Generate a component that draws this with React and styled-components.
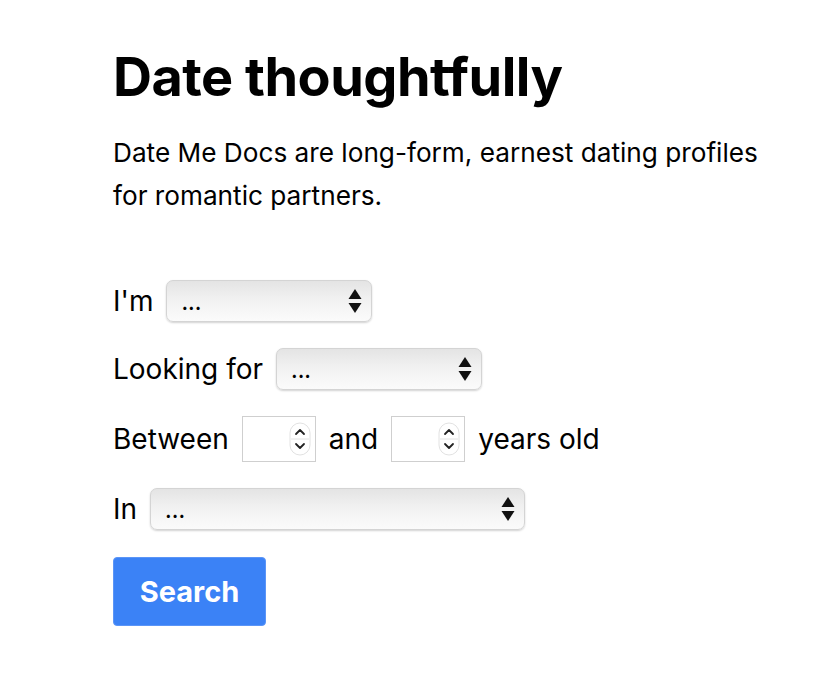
import React from "react";
import styled, { createGlobalStyle } from "styled-components";

const GlobalStyle = createGlobalStyle`
  html, body {
    margin: 0;
    padding: 0;
    background: #ffffff;
  }
  body {
    font-family: Inter, "Noto Sans", sans-serif;
    color: #000;
  }
`;

const Page = styled.main`
  padding: 44px 0 0 113px;
`;

const Title = styled.h1`
  font-size: 54px;
  font-weight: 700;
  letter-spacing: -0.5px;
  line-height: 65px;
  margin: 0 0 22px;
`;

const Lead = styled.p`
  font-size: 26.2px;
  line-height: 43px;
  margin: 0 0 63px;
  max-width: 660px;
`;

const Form = styled.form`
  display: flex;
  flex-direction: column;
  align-items: flex-start;
  gap: 26px;
`;

const Row = styled.label`
  display: flex;
  align-items: center;
  gap: 13px;
  font-size: 28px;
`;

const SelectWrap = styled.span`
  position: relative;
  display: inline-flex;
`;

const Select = styled.select`
  appearance: none;
  -webkit-appearance: none;
  width: ${(p) => p.$width}px;
  height: 42px;
  border: 1px solid #d4d4d4;
  border-radius: 7px;
  padding: 2px 34px 0 14px;
  font-family: Inter, "Noto Sans", sans-serif;
  font-size: 22px;
  font-weight: 500;
  color: #000;
  background: linear-gradient(to bottom, #e4e4e4 0%, #f1f1f1 45%, #fbfbfb 100%);
  box-shadow: 0 1px 2px rgba(0, 0, 0, 0.18);
  outline: none;
`;

const Arrows = styled.svg`
  position: absolute;
  right: 10px;
  top: 50%;
  transform: translateY(-50%);
  pointer-events: none;
`;

const NumberWrap = styled.span`
  position: relative;
  display: inline-flex;
`;

const NumberInput = styled.input`
  appearance: textfield;
  -moz-appearance: textfield;
  width: 74px;
  height: 46px;
  box-sizing: border-box;
  border: 1px solid #cfcfcf;
  border-radius: 0;
  font-family: Inter, "Noto Sans", sans-serif;
  font-size: 20px;
  padding: 0 30px 0 6px;
  background: #fff;
  outline: none;

  &::-webkit-inner-spin-button,
  &::-webkit-outer-spin-button {
    -webkit-appearance: none;
    margin: 0;
  }
`;

const Spinner = styled.svg`
  position: absolute;
  right: 5px;
  top: 50%;
  transform: translateY(-50%);
  pointer-events: none;
`;

const Button = styled.button`
  margin-top: 1px;
  width: 153px;
  height: 69px;
  border: 1px solid #5b95f7;
  border-radius: 4px;
  background: #3b82f6;
  color: #fff;
  font-family: Inter, "Noto Sans", sans-serif;
  font-size: 29px;
  font-weight: 700;
  cursor: pointer;
`;

const Dropdown = ({ width }) => (
  <SelectWrap>
    <Select $width={width} defaultValue="">
      <option value="">...</option>
    </Select>
    <Arrows width="14" height="26" viewBox="0 0 14 26">
      <path d="M7 1 L13.5 11 L0.5 11 Z" fill="#111" />
      <path d="M7 25 L13.5 15 L0.5 15 Z" fill="#111" />
    </Arrows>
  </SelectWrap>
);

const Age = () => (
  <NumberWrap>
    <NumberInput type="number" />
    <Spinner width="22" height="34" viewBox="0 0 22 34">
      <rect x="1" y="1" width="20" height="32" rx="10" fill="#fff" stroke="#e2e2e2" />
      <line x1="2" y1="17" x2="20" y2="17" stroke="#e2e2e2" />
      <path d="M7 12 L11 8 L15 12" fill="none" stroke="#222" strokeWidth="1.8" strokeLinecap="round" strokeLinejoin="round" />
      <path d="M7 22 L11 26 L15 22" fill="none" stroke="#222" strokeWidth="1.8" strokeLinecap="round" strokeLinejoin="round" />
    </Spinner>
  </NumberWrap>
);

export default function App() {
  return (
    <Page>
      <GlobalStyle />
      <Title>Date thoughtfully</Title>
      <Lead>
        Date Me Docs are long-form, earnest dating profiles for romantic partners.
      </Lead>
      <Form onSubmit={(e) => e.preventDefault()}>
        <Row>
          I'm <Dropdown width={206} />
        </Row>
        <Row>
          Looking for <Dropdown width={206} />
        </Row>
        <Row as="div">
          Between <Age /> and <Age /> years old
        </Row>
        <Row>
          In <Dropdown width={375} />
        </Row>
        <Button type="submit">Search</Button>
      </Form>
    </Page>
  );
}
